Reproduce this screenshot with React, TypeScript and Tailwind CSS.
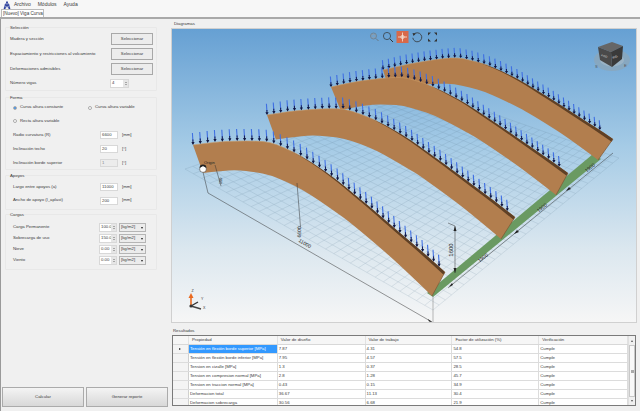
import React from "react";

type P = [number, number];
const topB: P[] = [[193,145],[215,142],[237,141],[255,141],[270,142],[285,148],[303,157],[320,168],[337,180],[355,195],[370,207],[400,233],[425,254],[445,272]];
const botB: P[] = [[203,173],[220,171],[237,170],[255,172],[270,175],[287,182],[303,190],[320,201],[337,213],[347,220],[370,239],[400,265],[432,296]];
const S0: P = [193,145], E0: P = [445,272], B0: P = [432,296];
const beams: { S: P; E: P; B: P; k: number }[] = [
  { S: [383,70], E: [613,139], B: [598,160], k: 0.82 },
  { S: [331,87], E: [568,173], B: [556,195], k: 0.88 },
  { S: [267,115], E: [515,217], B: [501,239], k: 0.94 },
  { S: S0, E: E0, B: B0, k: 1 },
];
function mapper(S: P, E: P, B: P) {
  const ux = E0[0]-S0[0], uy = E0[1]-S0[1], vx = B0[0]-S0[0], vy = B0[1]-S0[1];
  const det = ux*vy - vx*uy;
  return (p: P): P => {
    const dx = p[0]-S0[0], dy = p[1]-S0[1];
    const a = (dx*vy - vx*dy)/det, b = (ux*dy - dx*uy)/det;
    return [S[0]+a*(E[0]-S[0])+b*(B[0]-S[0]), S[1]+a*(E[1]-S[1])+b*(B[1]-S[1])];
  };
}
const f = (n: number) => n.toFixed(1);
function smooth(pts: P[], move = true) {
  let d = (move ? "M" : "L") + f(pts[0][0]) + " " + f(pts[0][1]);
  for (let i = 1; i < pts.length - 1; i++) {
    const mx = (pts[i][0]+pts[i+1][0])/2, my = (pts[i][1]+pts[i+1][1])/2;
    d += ` Q${f(pts[i][0])} ${f(pts[i][1])} ${f(mx)} ${f(my)}`;
  }
  const l = pts[pts.length-1];
  return d + ` L${f(l[0])} ${f(l[1])}`;
}
function sample(pts: P[], step: number): P[] {
  const out: P[] = [pts[0]];
  let left = step;
  for (let i = 1; i < pts.length; i++) {
    let a = pts[i-1];
    const b = pts[i];
    let len = Math.hypot(b[0]-a[0], b[1]-a[1]);
    while (len >= left) {
      const t = left/len;
      a = [a[0]+(b[0]-a[0])*t, a[1]+(b[1]-a[1])*t];
      out.push(a);
      len -= left;
      left = step;
    }
    left -= len;
  }
  return out;
}
const L: P = [185,169], F: P = [433,310], R: P = [619,158], K: P = [420,88];
const lerp = (a: P, b: P, t: number): P => [a[0]+(b[0]-a[0])*t, a[1]+(b[1]-a[1])*t];

function Scene() {
  const grid: React.ReactElement[] = [];
  for (let i = 0; i <= 30; i++) {
    const t = i/30;
    const a = lerp(L, F, t), b = lerp(K, R, t), c = lerp(L, K, t), d = lerp(F, R, t);
    grid.push(<line key={"a"+i} x1={a[0]} y1={a[1]} x2={b[0]} y2={b[1]} />);
    grid.push(<line key={"b"+i} x1={c[0]} y1={c[1]} x2={d[0]} y2={d[1]} />);
  }
  return (
    <svg className="block w-[464px] h-[293px]" viewBox="172 29 464 293">
      <defs>
        <linearGradient id="sky" x1="0" y1="0" x2="0" y2="1">
          <stop offset="0" stopColor="#66a0d3" />
          <stop offset="0.4" stopColor="#a5cbe6" />
          <stop offset="0.75" stopColor="#dbe7ef" />
          <stop offset="1" stopColor="#f6f6f6" />
        </linearGradient>
      </defs>
      <rect x="172" y="29" width="464" height="293" fill="url(#sky)" />
      <g stroke="#5f7f96" strokeWidth="0.35" opacity="0.45">{grid}</g>
      <polygon points="427,293 433,297 601,159 593,154" fill="#6a9a62" />
      {beams.map((bm, n) => {
        const m = mapper(bm.S, bm.E, bm.B);
        const top = topB.map(m), bot = botB.map(m);
        const d = smooth(top) + " " + smooth([...bot].reverse(), false) + " Z";
        const dark = top.slice(5);
        const darkIn = dark.map((p, i): P => [p[0]-0.6*(i/dark.length)*2.6, p[1]+(i/dark.length)*3.2]);
        const arrows = sample(top, 7.4*bm.k).slice(0, 40);
        const endI = top[top.length-1], endB = bot[bot.length-1];
        return (
          <g key={n}>
            <path d={d} fill="#b27e4e" />
            <path d={smooth(dark) + " " + smooth([...darkIn].reverse(), false) + " Z"} fill="#5f4025" />
            <path d={smooth(top.slice(0,7))} fill="none" stroke="#c99a66" strokeWidth="0.6" />
            <line x1={endI[0]} y1={endI[1]} x2={endB[0]} y2={endB[1]} stroke="#7c5632" strokeWidth="0.7" />
            {arrows.map((a, i) => {
              const l = 12*bm.k;
              return (
                <g key={i}>
                  <line x1={a[0]-0.6} y1={a[1]-l} x2={a[0]-0.1} y2={a[1]-l*0.35} stroke="#3f70e2" strokeWidth="1.1" />
                  <line x1={a[0]-0.1} y1={a[1]-l*0.45} x2={a[0]} y2={a[1]-l*0.1} stroke="#14205c" strokeWidth="1.1" />
                  <polygon points={`${f(a[0]-1.6)},${f(a[1]-l*0.25)} ${f(a[0]+1.6)},${f(a[1]-l*0.25)} ${f(a[0])},${f(a[1])}`} fill="#101844" />
                </g>
              );
            })}
          </g>
        );
      })}
      <g stroke="#333" strokeWidth="0.5" fill="none">
        <polyline points="203,172 208,193 432,322" />
        <line x1="433" y1="296" x2="433" y2="323" stroke="#777" />
        <line x1="297" y1="183" x2="300.5" y2="227" />
        <line x1="215" y1="165" x2="221" y2="186" />
        <polyline points="448,223 455,226 455,273" />
        <line x1="448" y1="288" x2="613" y2="153" />
      </g>
      <g fill="#222">
        <polygon points="432,322 428,319 429,321.5" />
        <polygon points="455,226 453.5,231 456.5,231" />
        <polygon points="455,273 453.5,268 456.5,268" />
        <polygon points="449,287 452,283 453,285" />
        <polygon points="514,234 517,230 519,232" />
        <polygon points="566,191 569,187 571,189" />
      </g>
      <g fontFamily="Liberation Sans, sans-serif" fill="#222" fontSize="5">
        <text x="204" y="164" fontSize="4">Origin</text>
        <text transform="translate(304,245) rotate(30)" textAnchor="middle">11000</text>
        <text transform="translate(301,232) rotate(-88)" textAnchor="middle">6600</text>
        <text transform="translate(222,181) rotate(-85)" textAnchor="middle" fontSize="4">150</text>
        <text transform="translate(453,250) rotate(-90)" textAnchor="middle" fontSize="6">1600</text>
        <text transform="translate(484,259) rotate(-40)" textAnchor="middle">1900</text>
        <text transform="translate(543,209) rotate(-40)" textAnchor="middle">1900</text>
        <text transform="translate(591,169) rotate(-40)" textAnchor="middle">1900</text>
      </g>
      <circle cx="203" cy="169" r="3.4" fill="#fff" stroke="#222" strokeWidth="0.5" />
      <path d="M199.6 168a3.4 3.4 0 0 1 6.8 0l-3.4 -2z" fill="#222" />
      {/* toolbar */}
      <g fill="none" stroke="#333" strokeWidth="0.7">
        <circle cx="373.5" cy="36" r="3" stroke="#777" />
        <rect x="372" y="34.5" width="3" height="3" stroke="#999" strokeWidth="0.5" />
        <line x1="376" y1="38.5" x2="378.5" y2="41" stroke="#666" />
        <circle cx="387" cy="36" r="3.6" />
        <line x1="390" y1="39" x2="393" y2="42" strokeWidth="1" />
      </g>
      <rect x="396.5" y="31" width="12" height="12" fill="#d8694a" />
      <g stroke="#f6e6d8" strokeWidth="0.8" fill="none">
        <line x1="402.5" y1="32.5" x2="402.5" y2="41.5" />
        <line x1="398" y1="37" x2="407" y2="37" />
        <circle cx="402.5" cy="37" r="1.6" />
      </g>
      <path d="M414 34.2a4.5 4.5 0 1 1 -1.2 3.6" fill="none" stroke="#333" strokeWidth="0.8" />
      <polygon points="412.5,33 416,33.5 413.5,36" fill="#333" />
      <g fill="#333">
        <polygon points="428,32.5 431,32.5 428,35.5" />
        <polygon points="437,32.5 434,32.5 437,35.5" />
        <polygon points="428,41.5 431,41.5 428,38.5" />
        <polygon points="437,41.5 434,41.5 437,38.5" />
      </g>
      {/* view cube */}
      <ellipse cx="612" cy="60" rx="18" ry="11" fill="#8ba6ba" opacity="0.8" />
      <ellipse cx="612" cy="60" rx="12" ry="6.5" fill="#9fb6c7" opacity="0.8" />
      <polygon points="598,47 612,42 623,46 611,52" fill="#666" />
      <polygon points="598,47 611,52 612,67 600,60" fill="#4a4a4a" />
      <polygon points="611,52 623,46 622,59 612,67" fill="#3a3a3a" />
      <g fill="#ddd" fontFamily="Liberation Sans, sans-serif" fontSize="3">
        <text transform="translate(601,56) rotate(20)">FRO</text>
        <text transform="translate(613,59) rotate(-25)">RIG</text>
      </g>
      <g fill="#555" fontFamily="Liberation Sans, sans-serif" fontSize="4">
        <text x="595" y="68">S</text>
        <text x="624" y="67">E</text>
      </g>
      {/* triad */}
      <line x1="191" y1="306" x2="191" y2="297" stroke="#ea6a1f" strokeWidth="1.6" />
      <polygon points="188.5,298 193.5,298 191,293" fill="#ea6a1f" />
      <line x1="191" y1="306" x2="198" y2="302" stroke="#333" strokeWidth="1.4" />
      <line x1="191" y1="306" x2="201" y2="309" stroke="#444" strokeWidth="1.4" />
      <circle cx="191" cy="306" r="1.6" fill="#333" />
      <g fontFamily="Liberation Sans, sans-serif" fontSize="3.6" fill="#333">
        <text x="191.5" y="291.5">Z</text>
        <text x="201" y="299.5">Y</text>
        <text x="203" y="309">X</text>
      </g>
    </svg>
  );
}

const rowsData = [
  ["Tensión en flexión borde superior [MPa]", "7.87", "4.31", "54.8"],
  ["Tensión en flexión borde inferior [MPa]", "7.95", "4.57", "57.5"],
  ["Tension en cizalle [MPa]", "1.3", "0.37", "28.5"],
  ["Tension en compresion normal [MPa]", "2.8", "1.28", "45.7"],
  ["Tension en traccion normal [MPa]", "0.43", "0.15", "34.9"],
  ["Deformacion total", "36.67", "11.13", "30.4"],
  ["Deformacion sobrecarga", "30.56", "6.68", "21.9"],
];

function Group({ label, h, mt, children }: { label: string; h: string; mt: string; children: React.ReactNode }) {
  return (
    <div className={`${h} ${mt} ml-[4px] w-[152px] border border-[#e8e8e8] rounded-[1px] shrink-0`}>
      <div className="-mt-[3px] ml-[4px] h-[6px] leading-[6px]">{label}</div>
      {children}
    </div>
  );
}

function Btn() {
  return (
    <div className="w-[42px] h-[12px] border border-[#a8a8a8] bg-[#ececec] flex items-center justify-center">Seleccionar</div>
  );
}
function Input({ v, disabled }: { v: string; disabled?: boolean }) {
  return (
    <div className={`w-[18px] h-[8px] border border-[#d8d8d8] pl-[1px] leading-[6px] ${disabled ? "bg-[#ececec] text-[#888]" : "bg-white"}`}>{v}</div>
  );
}
function Spin({ w, v }: { w: string; v: string }) {
  return (
    <div className={`${w} h-[9px] border border-[#d8d8d8] bg-white flex items-center overflow-hidden`}>
      <span className="flex-1 pl-[1px] overflow-hidden whitespace-nowrap">{v}</span>
      <span className="w-[5px] h-full bg-[#e6e6e6] flex flex-col items-center justify-center gap-[1px]">
        <span className="w-0 h-0 border-x-[1.5px] border-x-transparent border-b-[1.5px] border-b-[#666]" />
        <span className="w-0 h-0 border-x-[1.5px] border-x-transparent border-t-[1.5px] border-t-[#666]" />
      </span>
    </div>
  );
}
function Radio({ on }: { on?: boolean }) {
  return (
    <span className="w-[4px] h-[4px] rounded-full border border-[#aaa] bg-white flex items-center justify-center shrink-0">
      {on && <span className="w-[2px] h-[2px] rounded-full bg-[#2f7fd6]" />}
    </span>
  );
}
function Field({ label, v, unit, h, disabled }: { label: string; v: string; unit: string; h: string; disabled?: boolean }) {
  return (
    <div className={`${h} flex items-center pl-[7px]`}>
      <span className="w-[87px] whitespace-nowrap">{label}</span>
      <Input v={v} disabled={disabled} />
      <span className="ml-[4px]">{unit}</span>
    </div>
  );
}
function Load({ label, v }: { label: string; v: string }) {
  return (
    <div className="h-[11px] flex items-center pl-[7px]">
      <span className="w-[86px] whitespace-nowrap">{label}</span>
      <Spin w="w-[18px]" v={v} />
      <div className="ml-[2px] w-[27px] h-[9px] border border-[#b5b5b5] bg-[#ececec] flex items-center justify-between px-[1px]">
        <span>[kg/m2]</span>
        <span className="w-0 h-0 border-x-[1.5px] border-x-transparent border-t-[2px] border-t-[#222] mr-[1px]" />
      </div>
    </div>
  );
}
function BigBtn({ t }: { t: string }) {
  return (
    <div className="w-[82px] h-[20px] border border-[#ababab] bg-gradient-to-b from-[#f4f4f4] to-[#d8d8d8] flex items-center justify-center">{t}</div>
  );
}
const cellCols = ["w-[89px]", "w-[88px]", "w-[87px]", "w-[87px]", "w-[89px]"];

export default function App() {
  return (
    <div className="w-[640px] h-[411px] overflow-hidden bg-[#f0f0f0] flex flex-col font-['Liberation_Sans'] text-[4.3px] text-[#3a3a3a]">
      <div className="h-[9px] shrink-0 bg-[#f7f7f7] flex items-center text-[5px]">
        <svg className="ml-[3px] w-[8px] h-[8px]" viewBox="0 0 16 16">
          <path d="M8 1 2 15h2.5L8 7l3.5 8H14zM3 8h10" fill="none" stroke="#2a3f9c" strokeWidth="2" />
        </svg>
        <span className="ml-[3px]">Archivo</span>
        <span className="ml-[7px]">Módulos</span>
        <span className="ml-[7px]">Ayuda</span>
      </div>
      <div className="h-[8px] shrink-0 bg-[#f7f7f7] flex items-end pl-[1px]">
        <div className="h-[8px] w-[43px] bg-white border border-b-0 border-[#bbb] pl-[1px] leading-[7px] text-[4.6px] whitespace-nowrap">[Nuevo] Viga Curva</div>
      </div>
      <div className="h-[2px] shrink-0 bg-[#a9a9a9]" />
      <div className="flex-1 min-h-0 flex">
        <div className="w-[170px] shrink-0 border-l border-[#9a9a9a] flex flex-col pt-[8px] pb-[4px]">
          <Group label="Selección" h="h-[64px]" mt="mt-0">
            <div className="h-[15px] mt-[0.5px] flex items-center pl-[4px]"><span className="w-[101px] whitespace-nowrap">Madera y sección</span><Btn /></div>
            <div className="h-[15px] flex items-center pl-[4px]"><span className="w-[101px] whitespace-nowrap">Espaciamiento y restricciones al volcamiento</span><Btn /></div>
            <div className="h-[15px] flex items-center pl-[4px]"><span className="w-[101px] whitespace-nowrap">Deformaciones admisibles</span><Btn /></div>
            <div className="h-[13px] flex items-center pl-[4px]"><span className="w-[100px] whitespace-nowrap">Número vigas</span><Spin w="w-[19px]" v="4" /></div>
          </Group>
          <Group label="Forma" h="h-[73px]" mt="mt-[6px]">
            <div className="h-[13px] flex items-center pl-[7px]">
              <Radio on /><span className="ml-[3px] w-[68px]">Curva altura constante</span><Radio /><span className="ml-[3px]">Curva altura variable</span>
            </div>
            <div className="h-[14px] flex items-center pl-[7px]"><Radio /><span className="ml-[3px]">Recta altura variable</span></div>
            <Field label="Radio curvatura (R)" v="6600" unit="[mm]" h="h-[14px]" />
            <Field label="Inclinación techo" v="20" unit="[°]" h="h-[14px]" />
            <Field label="Inclinación borde superior" v="1" unit="[°]" h="h-[14px]" disabled />
          </Group>
          <Group label="Apoyos" h="h-[35px]" mt="mt-[5px]">
            <Field label="Largo entre apoyos (a)" v="11000" unit="[mm]" h="h-[14px] mt-[1px]" />
            <Field label="Ancho de apoyo (l_aplast)" v="200" unit="[mm]" h="h-[13px]" />
          </Group>
          <Group label="Cargas" h="h-[56px]" mt="mt-[4px]">
            <div className="mt-[4px]" />
            <Load label="Carga Permanente" v="100.0" />
            <Load label="Sobrecarga de uso" v="150.0" />
            <Load label="Nieve" v="0.00" />
            <Load label="Viento" v="0.00" />
          </Group>
          <div className="mt-auto flex gap-[2px] pl-[1px]">
            <BigBtn t="Calcular" /><BigBtn t="Generar reporte" />
          </div>
        </div>
        <div className="flex-1 min-w-0 flex flex-col pl-[1px]">
          <div className="h-[9px] pl-[3px] leading-[9px] shrink-0 mt-[0px]">Diagramas</div>
          <div className="w-[466px] h-[295px] border border-[#d0d0d0] shrink-0"><Scene /></div>
          <div className="h-[12px] pl-[2px] leading-[16px] shrink-0">Resultados</div>
          <div className="w-[464px] h-[71px] border border-[#7a7a7a] ml-[1px] bg-white flex overflow-hidden shrink-0">
            <div className="w-[455px] shrink-0 flex flex-col">
              <div className="h-[9px] flex shrink-0 border-b border-[#d8d8d8] bg-[#f6f6f6]">
                <div className="w-[16px] border-r border-[#e2e2e2]" />
                {["Propiedad", "Valor de diseño", "Valor de trabajo", "Factor de utilización (%)", "Verificación"].map((h, i) => (
                  <div key={h} className={`${cellCols[i]} pl-[3px] leading-[8px] border-r border-[#e2e2e2] whitespace-nowrap`}>{h}</div>
                ))}
              </div>
              {rowsData.map((r, i) => (
                <div key={r[0]} className="h-[9px] flex shrink-0 border-b border-[#dcdcdc]">
                  <div className="w-[16px] border-r border-[#d0d0d0] bg-[#f4f4f4] flex items-center justify-center">
                    {i === 0 && <span className="w-0 h-0 border-y-[1.5px] border-y-transparent border-l-[2px] border-l-[#222]" />}
                  </div>
                  {[...r, "Cumple"].map((c, j) => (
                    <div key={j} className={`${cellCols[j]} pl-[1px] leading-[8px] border-r border-[#dcdcdc] whitespace-nowrap ${i === 0 && j === 0 ? "bg-[#3399ff] text-white" : ""}`}>{c}</div>
                  ))}
                </div>
              ))}
            </div>
            <div className="flex-1 bg-[#f0f0f0] border-l border-[#e0e0e0] flex flex-col items-center">
              <div className="h-[9px] flex items-center"><span className="w-0 h-0 border-x-[1.5px] border-x-transparent border-b-[2px] border-b-[#555]" /></div>
              <div className="flex-1 w-full bg-[#f8f8f8] border border-[#c8c8c8] flex items-center justify-center">
                <span className="w-[3px] h-[3px] bg-[#aaa]" />
              </div>
              <div className="h-[8px] flex items-center"><span className="w-0 h-0 border-x-[1.5px] border-x-transparent border-t-[2px] border-t-[#555]" /></div>
            </div>
          </div>
        </div>
      </div>
    </div>
  );
}
